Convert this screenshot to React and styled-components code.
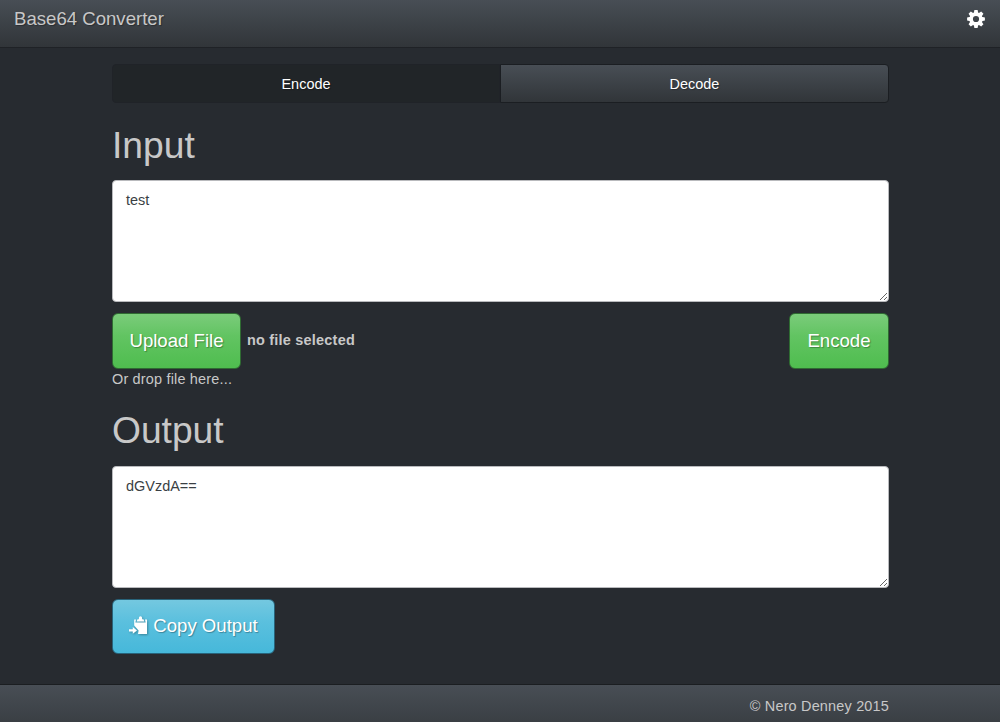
import React, { useState } from "react";
import styled, { createGlobalStyle } from "styled-components";

const GlobalStyle = createGlobalStyle`
  *, *::before, *::after { box-sizing: border-box; }
  html, body, #root { height: 100%; }
  body {
    margin: 0;
    overflow: hidden;
    background: #272b30;
    color: #c8c8c8;
    font-family: "Liberation Sans", Arial, sans-serif;
    font-size: 14.46px;
    line-height: 20px;
  }
`;

const Page = styled.div`
  display: flex;
  flex-direction: column;
  height: 722px;
`;

const Navbar = styled.nav`
  display: flex;
  justify-content: space-between;
  align-items: center;
  height: 48px;
  flex: none;
  padding: 0 15px 10px 14px;
  background: linear-gradient(#484e55, #3a3f44 60%, #313539);
  border-bottom: 1px solid #1f2226;
`;

const Brand = styled.span`
  font-size: 18.6px;
  text-shadow: 1px 1px 1px rgba(0, 0, 0, 0.3);
`;

const IconButton = styled.button`
  display: flex;
  padding: 0;
  border: 0;
  background: none;
  color: #fff;
`;

const Main = styled.main`
  flex: 1;
  width: 777px;
  margin: 0 auto 0 112px;
  padding-top: 16px;
`;

const Tabs = styled.div`
  display: grid;
  grid-template-columns: 388px 389px;
  height: 39px;
`;

const Tab = styled.button`
  padding: 0;
  border: 1px solid ${(p) => (p.$active ? "#202328" : "#1b1e22")};
  border-radius: ${(p) => (p.$active ? "4px 0 0 4px" : "0 4px 4px 0")};
  background: ${(p) => (p.$active ? "#212528" : "linear-gradient(#484e55, #3a3f44 60%, #313539)")};
  color: #fff;
  font: inherit;
  text-shadow: 1px 1px 1px rgba(0, 0, 0, 0.3);
`;

const Heading = styled.h1`
  margin: ${(p) => p.$top}px 0 ${(p) => 36 - p.$top}px;
  font-size: 37.2px;
  font-weight: 400;
  line-height: 41px;
`;

const TextBox = styled.textarea`
  display: block;
  width: 100%;
  height: 122px;
  padding: 9px 13px;
  border: 1px solid #b9babd;
  border-radius: 4px;
  background: #fff;
  color: #3a3f44;
  font: inherit;
  outline: none;
  resize: vertical;
`;

const Actions = styled.div`
  display: flex;
  align-items: flex-start;
  height: 56px;
  margin-top: 11px;
`;

const Button = styled.button`
  display: flex;
  align-items: center;
  justify-content: center;
  gap: 5px;
  width: ${(p) => p.$width}px;
  height: ${(p) => p.$height || 56}px;
  padding: 0 0 ${(p) => (p.$info ? 2 : 0)}px;
  border: 1px solid ${(p) => (p.$info ? "#28637a" : "#2f6b32")};
  border-radius: 6px;
  background: ${(p) => (p.$info ? "linear-gradient(#74c8e0, #5bc0de 40%, #46b8da)" : "linear-gradient(#7bcc7b, #62c462 40%, #4fbd4f)")};
  color: #fff;
  font: inherit;
  font-size: 18.6px;
  text-shadow: 1px 1px 1px rgba(0, 0, 0, 0.3);

  svg {
    margin-bottom: 1px;
    filter: drop-shadow(1px 1px 1px rgba(0, 0, 0, 0.3));
  }
`;

const FileName = styled.strong`
  flex: 1;
  padding: 17px 0 0 6px;
  letter-spacing: 0.22px;
`;

const Hint = styled.div`
  letter-spacing: 0.18px;
`;

const Footer = styled.footer`
  height: 38px;
  flex: none;
  padding: 11px 111px 0 0;
  border-top: 1px solid #1b1e21;
  background: linear-gradient(#484e55, #3a3f44);
  letter-spacing: 0.18px;
  text-align: right;
`;

const CogIcon = () => (
  <svg width="18" height="18" viewBox="-9 -9 18 18" fill="currentColor">
    {[0, 45, 90, 135, 180, 225, 270, 315].map((a) => (
      <path key={a} d="M-1.6-8.9H1.6L2.3-5.4H-2.3Z" transform={`rotate(${a})`} />
    ))}
    <circle r="4.9" fill="none" stroke="currentColor" strokeWidth="3.6" />
  </svg>
);

const PasteIcon = () => (
  <svg width="19" height="19" viewBox="0 0 19 19" fill="currentColor">
    <path d="M5.2 3.6H7L6.3 6.4H16.7L16 3.6H18V18H9L9.6 14.4L5.2 9.6Z" />
    <path d="M7.7 5.6L8.5 3.2H9.9V2Q9.9.2 11.5.2T13.1 2V3.2H14.5L15.3 5.6Z" />
    <path d="M0 13.3H3.8V11L8 14.4L3.8 17.8V15.5H0Z" />
  </svg>
);

export default function App() {
  const [input, setInput] = useState("test");
  const [output, setOutput] = useState("dGVzdA==");
  const [mode, setMode] = useState("Encode");
  const convert = () => {
    try {
      setOutput(mode === "Encode" ? btoa(input) : atob(input));
    } catch {
      setOutput("");
    }
  };
  return (
    <Page>
      <GlobalStyle />
      <Navbar>
        <Brand>Base64 Converter</Brand>
        <IconButton aria-label="Settings"><CogIcon /></IconButton>
      </Navbar>
      <Main>
        <Tabs>
          <Tab $active={mode === "Encode"} onClick={() => setMode("Encode")}>Encode</Tab>
          <Tab $active={mode === "Decode"} onClick={() => setMode("Decode")}>Decode</Tab>
        </Tabs>
        <Heading $top={22}>Input</Heading>
        <TextBox value={input} onChange={(e) => setInput(e.target.value)} spellCheck={false} />
        <Actions>
          <Button $width={129}>Upload File</Button>
          <FileName>no file selected</FileName>
          <Button $width={100} onClick={convert}>{mode}</Button>
        </Actions>
        <Hint>Or drop file here...</Hint>
        <Heading $top={21}>Output</Heading>
        <TextBox value={output} readOnly spellCheck={false} />
        <Actions>
          <Button $info $width={163} $height={55}><PasteIcon />Copy Output</Button>
        </Actions>
      </Main>
      <Footer>© Nero Denney 2015</Footer>
    </Page>
  );
}
